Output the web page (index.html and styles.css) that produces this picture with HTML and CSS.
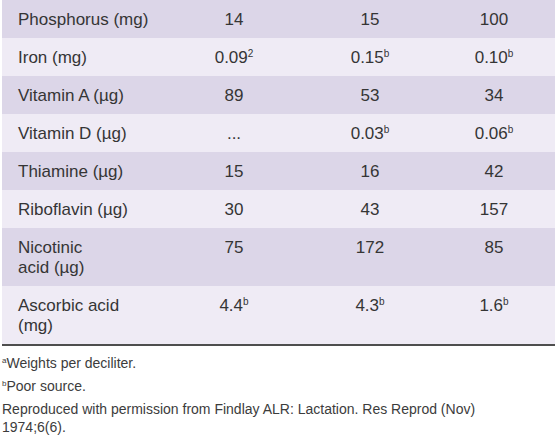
FILE: index.html
```html
<!DOCTYPE html>
<html>

<head>
  <meta charset="UTF-8">
  <meta name="viewport" content="width=device-width, initial-scale=1.0">
  <title>Milk composition</title>
  <link rel="stylesheet" href="styles.css">
</head>

<body>
  <div class="wrap">
    <table class="nutrients">
      <colgroup>
        <col class="col__name">
        <col class="col__val">
        <col class="col__val col__val--mid">
        <col class="col__val col__val--last">
      </colgroup>
      <tbody>
        <tr class="dark">
          <td>Phosphorus (mg)</td>
          <td>14</td>
          <td>15</td>
          <td>100</td>
        </tr>
        <tr>
          <td>Iron (mg)</td>
          <td>0.09<sup>2</sup></td>
          <td>0.15<sup>b</sup></td>
          <td>0.10<sup>b</sup></td>
        </tr>
        <tr class="dark">
          <td>Vitamin A (µg)</td>
          <td>89</td>
          <td>53</td>
          <td>34</td>
        </tr>
        <tr>
          <td>Vitamin D (µg)</td>
          <td>...</td>
          <td>0.03<sup>b</sup></td>
          <td>0.06<sup>b</sup></td>
        </tr>
        <tr class="dark">
          <td>Thiamine (µg)</td>
          <td>15</td>
          <td>16</td>
          <td>42</td>
        </tr>
        <tr>
          <td>Riboflavin (µg)</td>
          <td>30</td>
          <td>43</td>
          <td>157</td>
        </tr>
        <tr class="dark">
          <td>Nicotinic<br>acid (µg)</td>
          <td>75</td>
          <td>172</td>
          <td>85</td>
        </tr>
        <tr>
          <td>Ascorbic acid<br>(mg)</td>
          <td>4.4<sup>b</sup></td>
          <td>4.3<sup>b</sup></td>
          <td>1.6<sup>b</sup></td>
        </tr>
      </tbody>
    </table>

    <div class="notes">
      <p><sup>a</sup>Weights per deciliter.</p>
      <p><sup>b</sup>Poor source.</p>
      <p>Reproduced with permission from Findlay ALR: Lactation. Res Reprod (Nov) 1974;6(6).</p>
    </div>
  </div>
</body>

</html>
```

FILE: styles.css
```css
* {
  padding: 0;
  margin: 0;
}

body {
  font-family: "Liberation Sans", Arial, sans-serif;
  color: #353535;
  background-color: white;
}

.wrap {
  width: 553px;
  margin-left: 2px;
}

.nutrients {
  width: 553px;
  border-collapse: collapse;
  table-layout: fixed;
  font-size: 17px;
  line-height: 20px;
  background-color: #efebf5;
  border-bottom: 2px solid #4e4e4e;
}

.col__name {
  width: 166px;
}

.col__val {
  width: 132px;
}

.col__val--mid {
  width: 140px;
}

.col__val--last {
  width: 115px;
}

.nutrients .dark {
  background-color: #dcd6e8;
}

.nutrients td {
  padding: 10px 0 8px;
  text-align: center;
  vertical-align: top;
}

.nutrients td:first-child {
  padding-left: 16px;
  text-align: left;
}

.nutrients td:last-child {
  padding-right: 7px;
}

.nutrients sup {
  font-size: 10px;
  line-height: 0;
  vertical-align: 6px;
}

.notes {
  max-width: 505px;
  padding-top: 8px;
  font-size: 14px;
  line-height: 18px;
  color: #3c3c3c;
}

.notes p {
  margin-bottom: 5px;
}

.notes sup {
  font-size: 8px;
  line-height: 0;
  vertical-align: 5px;
}
```
